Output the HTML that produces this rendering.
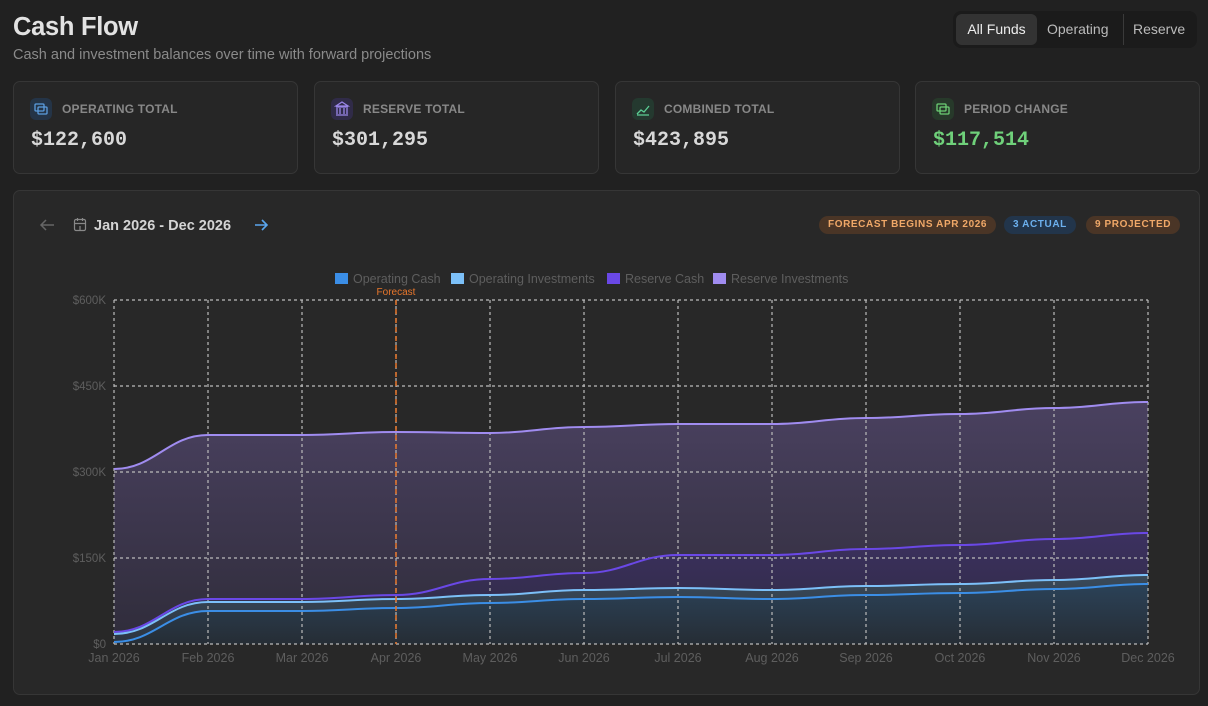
<!DOCTYPE html>
<html><head><meta charset="utf-8"><style>
*{box-sizing:border-box;margin:0;padding:0}
body{width:1208px;height:706px;background:#212121;font-family:"Liberation Sans",sans-serif;color:#ddd;overflow:hidden;position:relative}
h1{position:absolute;left:13px;top:13px;font-size:25.5px;font-weight:700;color:#e2e2e2;letter-spacing:-0.3px}
.sub{position:absolute;left:13px;top:47px;font-size:14.5px;color:#8a8a8a}
.seg{position:absolute;left:953px;top:11px;width:244px;height:37px;background:#1b1b1b;border-radius:8px;font-size:14px}
.seg span{position:absolute;top:3px;height:31px;line-height:31px;color:#bbb}
.card{position:absolute;top:81px;width:285px;height:93px;background:#262626;border:1px solid #363636;border-radius:7px}
.ic{position:absolute;left:16px;top:16px;width:22px;height:22px;border-radius:6px}
.lbl{position:absolute;left:48px;top:20px;font-size:12px;font-weight:700;color:#888;letter-spacing:.2px}
.val{position:absolute;left:17px;top:47px;font-family:"Liberation Mono",monospace;font-weight:700;font-size:20px;color:#d8d8d8}
.panel{position:absolute;left:13px;top:190px;width:1187px;height:505px;background:#282828;border:1px solid #363636;border-radius:7px}
.pill{position:absolute;top:216px;height:18px;line-height:18px;border-radius:9px;font-size:10px;font-weight:700;letter-spacing:.6px;padding:0 9px}
</style></head><body>
<h1>Cash Flow</h1>
<div class="sub">Cash and investment balances over time with forward projections</div>
<div class="seg"><span style="left:3px;width:81px;background:#333;border-radius:6px;text-align:center;color:#eee">All Funds</span><span style="left:94px">Operating</span><span style="left:170px;top:3px;width:1px;height:31px;background:#3a3a3a"></span><span style="left:180px">Reserve</span></div>

<div class="card" style="left:13px"><div class="ic" style="background:#243447"><svg width="22" height="22" viewBox="0 0 22 22" fill="none" stroke="#5b9de0" stroke-width="1.3"><rect x="5" y="6" width="9" height="7" rx="1"/><rect x="8" y="9" width="9" height="7" rx="1"/></svg></div><div class="lbl">OPERATING TOTAL</div><div class="val">$122,600</div></div>
<div class="card" style="left:314px"><div class="ic" style="background:#302b48"><svg width="22" height="22" viewBox="0 0 22 22" fill="none" stroke="#9a86e8" stroke-width="1.3"><path d="M5 9h12M11 4l6 4H5z M6 10v6M9 10v6M13 10v6M16 10v6M5 17h12"/></svg></div><div class="lbl">RESERVE TOTAL</div><div class="val">$301,295</div></div>
<div class="card" style="left:615px"><div class="ic" style="background:#24392f"><svg width="22" height="22" viewBox="0 0 22 22" fill="none" stroke="#5ccf95" stroke-width="1.3"><path d="M5 16l4-4 3 2 5-6M5 17h12"/></svg></div><div class="lbl">COMBINED TOTAL</div><div class="val">$423,895</div></div>
<div class="card" style="left:915px"><div class="ic" style="background:#27392a"><svg width="22" height="22" viewBox="0 0 22 22" fill="none" stroke="#6ccf74" stroke-width="1.3"><rect x="5" y="6" width="9" height="7" rx="1"/><rect x="8" y="9" width="9" height="7" rx="1"/></svg></div><div class="lbl">PERIOD CHANGE</div><div class="val" style="color:#6fd07a">$117,514</div></div>

<div class="panel"></div>
<svg style="position:absolute;left:0;top:0" width="1208" height="706">
<g stroke="#666" stroke-width="1.5" fill="none"><path d="M54 225h-13M46 220l-5 5 5 5"/></g>
<g stroke="#888" stroke-width="1.2" fill="none"><rect x="74.5" y="219.5" width="11" height="11" rx="1.5"/><path d="M74.5 223.5h11M77.5 218v3M82.5 218v3M80 226v4"/></g>
<text x="94" y="230" font-size="14.5" font-weight="700" fill="#d4d4d4" font-family="Liberation Sans">Jan 2026 - Dec 2026</text>
<g stroke="#5aa6ee" stroke-width="1.6" fill="none"><path d="M255 225h12M262 220l5 5-5 5"/></g>
</svg>
<div class="pill" style="left:819px;background:#4a3526;color:#f0a868">FORECAST BEGINS APR 2026</div>
<div class="pill" style="left:1004px;background:#22354b;color:#6cb0ee">3 ACTUAL</div>
<div class="pill" style="left:1086px;background:#4a3526;color:#f0a868">9 PROJECTED</div>

<svg id="ch" style="position:absolute;left:0;top:0" width="1208" height="706" font-family="Liberation Sans">
<defs>
<linearGradient id="g1" x1="0" y1="0" x2="0" y2="1"><stop offset="0" stop-color="#4a4160"/><stop offset="1" stop-color="#2f2c3a"/></linearGradient>
<linearGradient id="g2" x1="0" y1="0" x2="0" y2="1"><stop offset="0" stop-color="#3c3160"/><stop offset="1" stop-color="#2e2a40"/></linearGradient>
<linearGradient id="g3" x1="0" y1="0" x2="0" y2="1"><stop offset="0" stop-color="#3a4a5a"/><stop offset="1" stop-color="#2c3440"/></linearGradient>
<linearGradient id="g4" x1="0" y1="0" x2="0" y2="1"><stop offset="0" stop-color="#2b4258"/><stop offset="1" stop-color="#262d35"/></linearGradient>
</defs>
<g id="areas"></g>
<g stroke="#bbb" stroke-width="1.2" stroke-dasharray="3,3" fill="none" id="grid"></g>
<g id="lines" fill="none" stroke-width="2"></g>
<line x1="396" y1="300" x2="396" y2="644" stroke="#e8762b" stroke-width="1.5" stroke-dasharray="5,4"/>
<text x="396" y="295" font-size="10" fill="#e8762b" text-anchor="middle">Forecast</text>
<g font-size="11.5" fill="#5e5e5e" text-anchor="end"><text x="106" y="304">$600K</text><text x="106" y="390">$450K</text><text x="106" y="476">$300K</text><text x="106" y="562">$150K</text><text x="106" y="648">$0</text></g>
<g font-size="12.5" fill="#5e5e5e" text-anchor="middle" id="xl"></g>
<g font-size="12.5" fill="#5e5e5e">
<rect x="335" y="273" width="13" height="11" fill="#3b8ee6"/><text x="353" y="283">Operating Cash</text>
<rect x="451" y="273" width="13" height="11" fill="#7cc0f8"/><text x="469" y="283">Operating Investments</text>
<rect x="607" y="273" width="13" height="11" fill="#6a48e6"/><text x="625" y="283">Reserve Cash</text>
<rect x="713" y="273" width="13" height="11" fill="#a08cf0"/><text x="731" y="283">Reserve Investments</text>
</g>
</svg>
<script>
var X=i=>114+i*94;
var S=[[469,435,435,432,433,427,424,424,418,414,408,402],[632,599,599,595,579,573,555,555,549,545,539,533],[634,602,602,599,595,590,588,590,586,584,580,575],[642,611,611,608,603,599,597,599,595,593,589,584]];
var C=["#a08cf0","#6a48e6","#7cc0f8","#3b8ee6"],G=["g1","g2","g3","g4"];
function path(y){var d="M"+X(0)+" "+y[0];for(var i=1;i<12;i++){var a=X(i-1),b=X(i);d+=" C"+(a+40)+" "+y[i-1]+" "+(b-40)+" "+y[i]+" "+b+" "+y[i];}return d;}
var A="",L="";
for(var k=0;k<4;k++){var p=path(S[k]);A+='<path d="'+p+' L1148 644 L114 644Z" fill="url(#'+G[k]+')"/>';L+='<path d="'+p+'" stroke="'+C[k]+'"/>';}
document.getElementById("areas").innerHTML=A;document.getElementById("lines").innerHTML=L;
var g="";for(var i=0;i<12;i++)g+='<path d="M'+X(i)+' 300V644"/>';[300,386,472,558,644].forEach(y=>g+='<path d="M114 '+y+'H1148"/>');
document.getElementById("grid").innerHTML=g;
var m=["Jan","Feb","Mar","Apr","May","Jun","Jul","Aug","Sep","Oct","Nov","Dec"],t="";
for(var i=0;i<12;i++)t+='<text x="'+X(i)+'" y="662">'+m[i]+' 2026</text>';
document.getElementById("xl").innerHTML=t;
</script>
</body></html>
